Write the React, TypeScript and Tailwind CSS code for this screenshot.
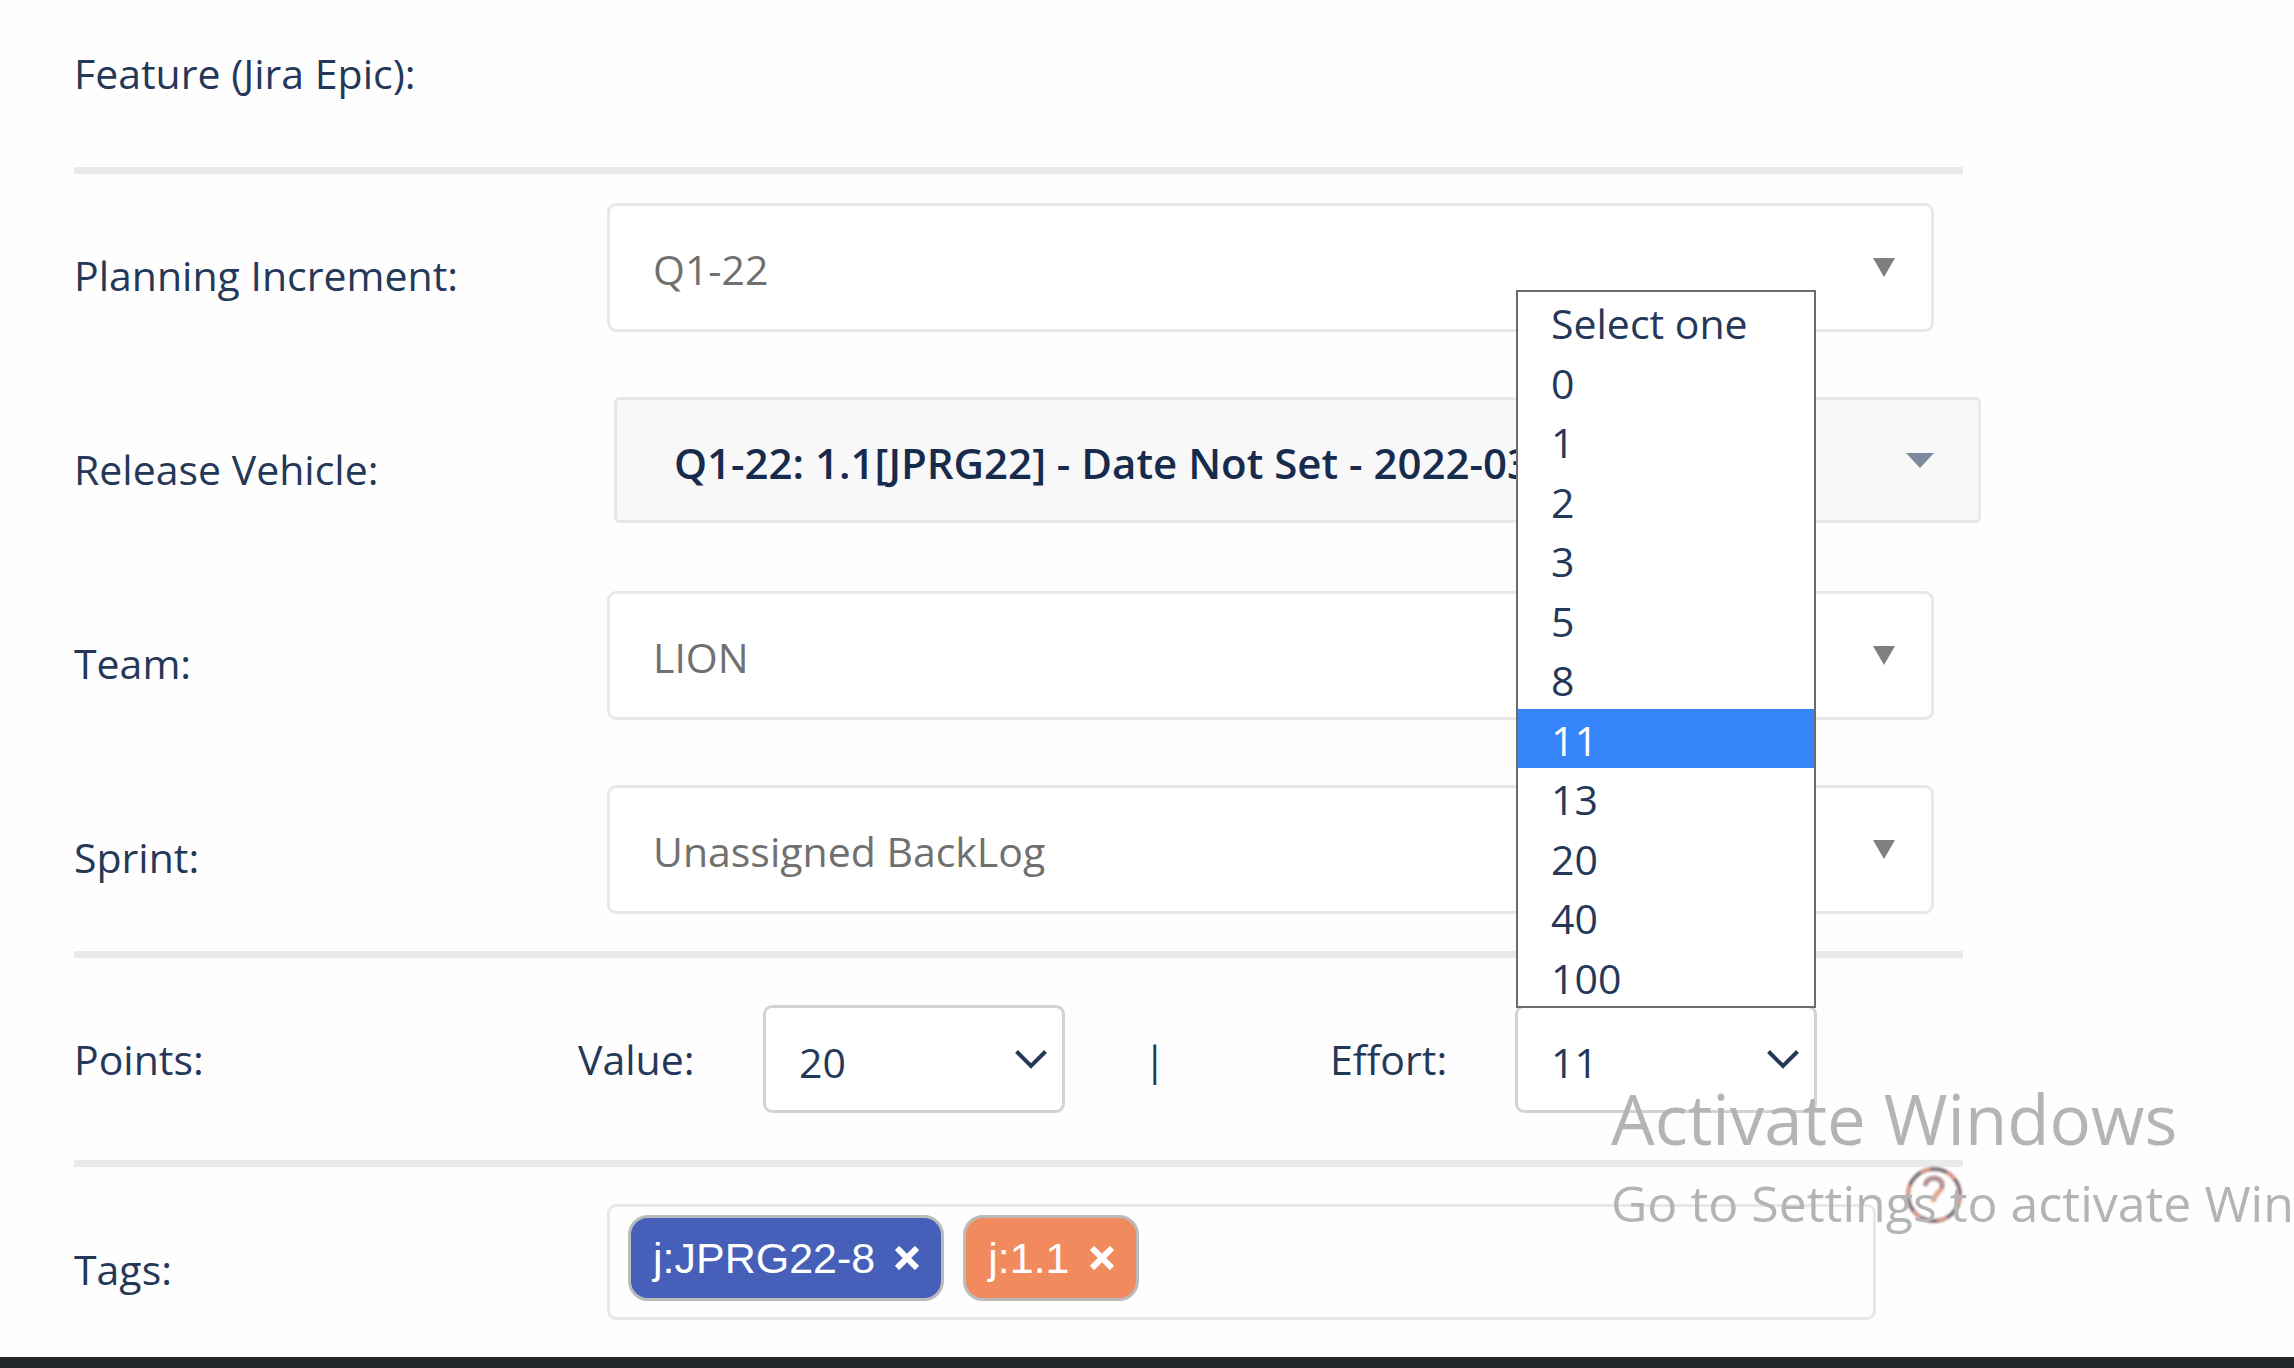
import { useState } from 'react';
import type { ReactNode } from 'react';

const effortOptions = ['Select one', '0', '1', '2', '3', '5', '8', '11', '13', '20', '40', '100'];

const initialTags = [
  { id: 'epic', label: 'j:JPRG22-8', className: 'bg-[#4660b9]' },
  { id: 'release', label: 'j:1.1', className: 'bg-[#f18b5e]' },
];

function Rule() {
  return <hr className="h-[7px] border-0 bg-[#eaeaea]" />;
}

function Row({ id, label, children }: { id: string; label: string; children: ReactNode }) {
  return (
    <div className="grid grid-cols-[533px_1fr]">
      <label htmlFor={id} className="pt-2 leading-[129px]">
        {label}
      </label>
      {children}
    </div>
  );
}

function PlainSelect({ id, value }: { id: string; value: string }) {
  return (
    <div className="relative mr-[29px]">
      <select
        id={id}
        defaultValue={value}
        className="block h-[129px] w-full appearance-none rounded-[9px] border-3 border-[#e8e8e8] bg-white px-[43px] pt-1 text-[#707070]"
      >
        <option>{value}</option>
      </select>
      <svg
        viewBox="0 0 22 19"
        className="pointer-events-none absolute top-[55px] right-[39px] h-[19px] w-[22px] fill-[#7f7f7f]"
      >
        <path d="M0 0h22L11 19z" />
      </svg>
    </div>
  );
}

function Chevron() {
  return (
    <svg
      viewBox="0 0 32 20"
      className="pointer-events-none absolute top-[44px] right-[18px] h-5 w-8 fill-none stroke-[#253858] stroke-[4]"
    >
      <path d="M1.500 2.500L16 17L30.500 2.500" />
    </svg>
  );
}

const pointsSelect =
  'block h-[108px] w-full appearance-none rounded-[9px] border-3 border-[#d2d2d2] bg-white pl-[33px]';

export default function App() {
  const [effort, setEffort] = useState('11');
  const [tags, setTags] = useState(initialTags);

  return (
    <div className="relative flex min-h-screen flex-col overflow-hidden bg-[#fefefe] font-['Open_Sans','Noto_Sans',sans-serif] text-[41px] text-[#253858]">
      <main className="flex-1 pr-[331px] pl-[74px]">
        <h2 className="pt-[35px] pb-[56px] leading-[76px]">Feature (Jira Epic):</h2>
        <Rule />

        <div className="my-[29px] flex flex-col gap-[57px]">
          <Row id="increment" label="Planning Increment:">
            <PlainSelect id="increment" value="Q1-22" />
          </Row>
          <Row id="vehicle" label="Release Vehicle:">
            <div className="relative -mr-[18px] ml-[7px]">
              <select
                id="vehicle"
                className="block h-[126px] w-full appearance-none rounded-[6px] border-3 border-[#e8e8e8] bg-[#f8f8f8] px-[57px] pt-1 text-[42px] font-semibold text-[#172b4d]"
              >
                <option>Q1-22: 1.1[JPRG22] - Date Not Set - 2022-03-31</option>
              </select>
              <svg
                viewBox="0 0 28 15"
                className="pointer-events-none absolute top-[56px] right-[47px] h-[15px] w-[28px] fill-[#7d899e]"
              >
                <path d="M0 0h28L14 15z" />
              </svg>
            </div>
          </Row>
          <Row id="team" label="Team:">
            <PlainSelect id="team" value="LION" />
          </Row>
          <Row id="sprint" label="Sprint:">
            <PlainSelect id="sprint" value="Unassigned BackLog" />
          </Row>
        </div>
        <Rule />

        <div className="grid grid-cols-[504px_185px_302px_101px_1fr_185px_302px_146px] py-[47px] leading-[108px]">
          <span>Points:</span>
          <label htmlFor="value">Value:</label>
          <div className="relative">
            <select id="value" defaultValue="20" className={pointsSelect}>
              <option>20</option>
            </select>
            <Chevron />
          </div>
          <span className="text-right">|</span>
          <span />
          <label htmlFor="effort">Effort:</label>
          <div className="relative">
            <select
              id="effort"
              value={effort}
              onChange={e => setEffort(e.target.value)}
              className={pointsSelect}
            >
              {effortOptions.map(option => (
                <option key={option}>{option}</option>
              ))}
            </select>
            <Chevron />

            {/* Open list */}
            <ul
              role="listbox"
              aria-label="Effort"
              className="absolute inset-x-px bottom-[105px] z-10 flex h-[718px] flex-col border-2 border-[#6b6b6b] bg-white"
            >
              {effortOptions.map(option => (
                <li
                  key={option}
                  role="option"
                  aria-selected={option === effort}
                  onClick={() => setEffort(option)}
                  className="flex flex-1 items-center pt-1 pl-[33px] leading-[55px] aria-selected:bg-[#3584f9] aria-selected:text-white"
                >
                  {option}
                </li>
              ))}
            </ul>
          </div>
        </div>
        <Rule />

        <div className="mt-[37px] grid grid-cols-[533px_1fr]">
          <span className="pt-[11px] leading-[108px]">Tags:</span>
          <div className="mr-[87px] flex h-[116px] gap-[19px] rounded-[9px] border-3 border-[#e8e8e8] px-[18px] pt-2">
            {tags.map(tag => (
              <span
                key={tag.id}
                className={`flex h-[86px] items-center gap-[20px] rounded-[20px] border-3 border-[#bbbbbb] px-[22px] font-['Liberation_Sans',sans-serif] text-[43px] text-white ${tag.className}`}
              >
                {tag.label}
                <button
                  aria-label={`Remove ${tag.label}`}
                  onClick={() => setTags(tags.filter(t => t.id !== tag.id))}
                >
                  <svg viewBox="0 0 24 24" className="size-[24px] fill-none stroke-white stroke-[6]">
                    <path d="M2 2L22 22M22 2L2 22" />
                  </svg>
                </button>
              </span>
            ))}
          </div>
        </div>
      </main>

      <footer className="h-[11px] bg-[#22262b]" />

      {/* Help button */}
      <button aria-label="Help" className="absolute right-[331px] bottom-[144px]">
        <svg viewBox="0 0 58 58" className="size-[58px] fill-none stroke-[4] blur-[1px]">
          <circle cx="29" cy="29" r="26" className="stroke-[#85737b]" />
          <circle cx="29" cy="29" r="26" className="stroke-[#d99a8a]" strokeDasharray="10 17" />
          <path d="M20 20c1-6 5-8 10-8 6 1 9 6 6 11" className="stroke-[#b3918f]" strokeWidth="5" />
          <path d="M36 23c-2 4-6 4-8 13" className="stroke-[#e0a594]" strokeWidth="5" />
        </svg>
      </button>

      {/* System watermark */}
      <div className="pointer-events-none absolute right-0 bottom-[126px] w-[683px] overflow-hidden whitespace-nowrap text-[#b4b4b4]">
        <p className="text-[69px] leading-[92px]">Activate Windows</p>
        <p className="text-[50px] leading-[78px]">Go to Settings to activate Windows.</p>
      </div>
    </div>
  );
}
